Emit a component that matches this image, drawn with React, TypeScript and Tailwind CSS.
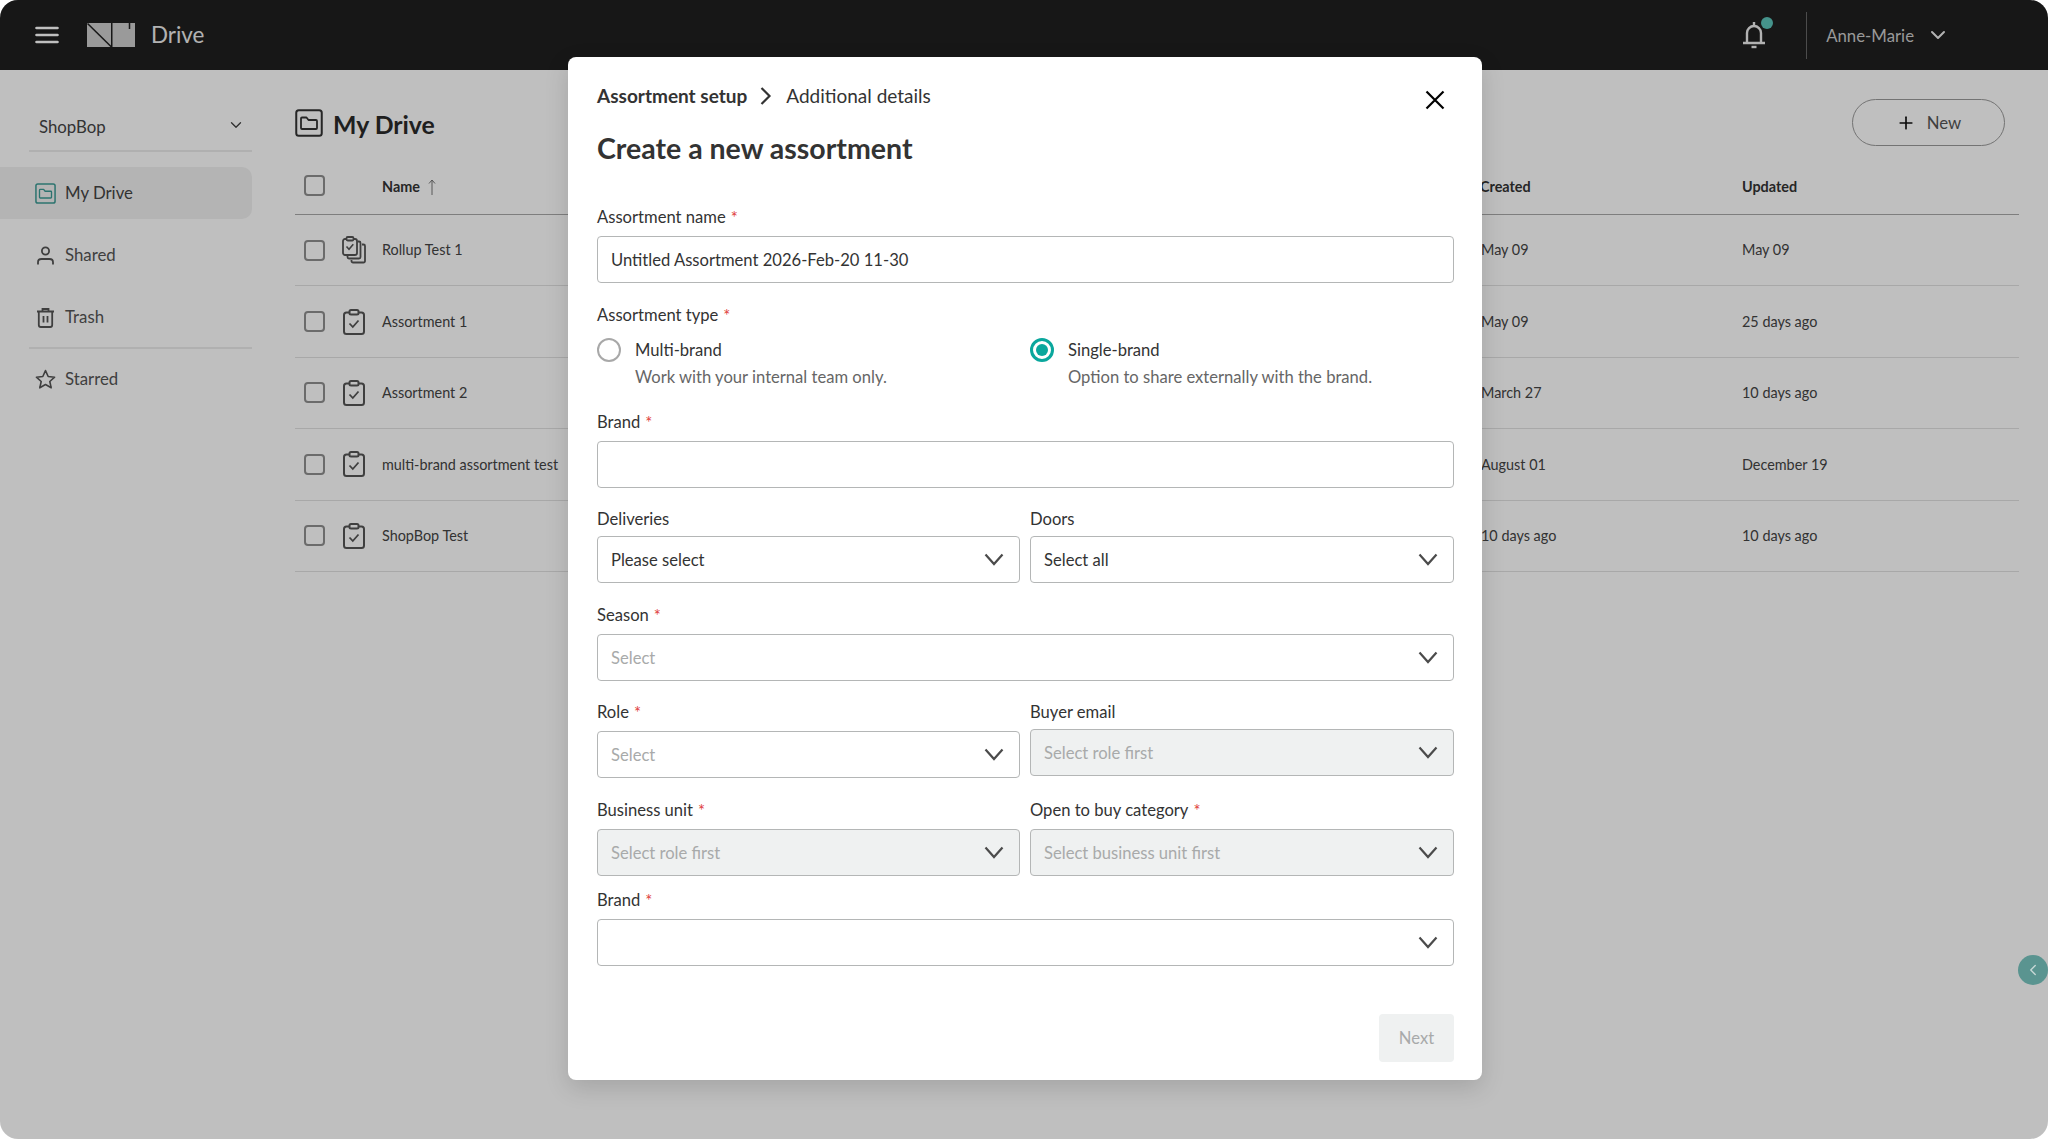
import React from "react";
import { ChevronDown, ChevronLeft, Plus } from "lucide-react";

const FolderIcon = ({ className }: { className: string }) => (
  <svg viewBox="0 0 28 28" fill="none" stroke="currentColor" className={className}>
    <rect x="1.25" y="1.25" width="25.5" height="25.5" rx="2.5" strokeWidth="2" />
    <path d="M6 9.5a1 1 0 0 1 1-1h4.5l2 2.5H21a1 1 0 0 1 1 1v7a1 1 0 0 1-1 1H7a1 1 0 0 1-1-1z" strokeWidth="1.8" strokeLinejoin="round" />
  </svg>
);

const ClipIcon = () => (
  <svg viewBox="0 0 22 26" fill="none" stroke="currentColor" strokeWidth="2" className="h-[26px] w-[22px] text-[#555]">
    <rect x="1" y="3.5" width="20" height="21.5" rx="2.5" />
    <rect x="6.5" y="1" width="9" height="4.5" rx="1.5" fill="#fff" />
    <path d="M6.5 14.5l3.3 3.5 5.7-6.5" strokeWidth="1.8" />
  </svg>
);

const RollupIcon = () => (
  <svg viewBox="0 0 24 28" fill="none" stroke="currentColor" strokeWidth="1.8" className="h-[28px] w-[24px] text-[#555]">
    <path d="M20 8.5h1.5a1.5 1.5 0 0 1 1.5 1.5v15a1.5 1.5 0 0 1-1.5 1.5H11a1.5 1.5 0 0 1-1.5-1.5v-1" />
    <path d="M15.5 5.5h1.5a1.5 1.5 0 0 1 1.5 1.5v14a1.5 1.5 0 0 1-1.5 1.5H7a1.5 1.5 0 0 1-1.5-1.5v-1" />
    <rect x="1" y="3" width="14" height="16" rx="2" fill="#fff" />
    <rect x="4.5" y="1" width="7" height="3.5" rx="1.2" fill="#fff" />
    <path d="M4.5 10.5l2.5 2.7 4.3-5" strokeWidth="1.6" />
  </svg>
);

const Logo = () => (
  <svg viewBox="0 0 48 24" className="h-[24px] w-[48px]">
    <rect x="0" y="0" width="24" height="24" fill="#cecece" />
    <rect x="25.5" y="0" width="22.5" height="24" fill="#cecece" />
    <path d="M0.5 0.5L24.5 24" stroke="#1f1f1f" strokeWidth="1.5" />
    <path d="M42.5 0v6" stroke="#1f1f1f" strokeWidth="1.5" />
  </svg>
);

const Req = () => <span className="relative top-[1px] ml-[5px] text-[#e0403c]">*</span>;

const Label = ({ text, req }: { text: string; req?: boolean }) => (
  <div className="text-[16.6px] leading-[22px] text-[#333]">
    {text}
    {req && <Req />}
  </div>
);

const FieldChevron = () => (
  <svg viewBox="0 0 20 13" fill="none" stroke="currentColor" strokeWidth="2.2" className="h-[13px] w-[20px] text-[#4b4b4b]">
    <path d="M1.5 1.5l8.5 9.5 8.5-9.5" />
  </svg>
);

const Field = ({
  value,
  placeholder,
  disabled,
  chevron = true,
}: {
  value?: string;
  placeholder?: string;
  disabled?: boolean;
  chevron?: boolean;
}) => (
  <div
    className={`flex h-[47px] items-center justify-between rounded-[4px] border border-[#b4b6b6] pl-[13px] pr-[15.5px] text-[16.6px] ${
      disabled ? "bg-[#eff1f1]" : "bg-white"
    }`}
  >
    <span className={`pt-[1px] ${value ? "text-[#333]" : "text-[#a8aaaa]"}`}>{value || placeholder}</span>
    {chevron && <FieldChevron />}
  </div>
);

const rows = [
  { name: "Rollup Test 1", created: "May 09", updated: "May 09", rollup: true },
  { name: "Assortment 1", created: "May 09", updated: "25 days ago" },
  { name: "Assortment 2", created: "March 27", updated: "10 days ago" },
  { name: "multi-brand assortment test", created: "August 01", updated: "December 19" },
  { name: "ShopBop Test", created: "10 days ago", updated: "10 days ago" },
];

const Checkbox = () => <div className="h-[21px] w-[21px] shrink-0 rounded-[4px] border-2 border-[#8f8f8f] bg-white" />;

export default function App() {
  return (
    <div className="relative h-[1139px] w-[2048px] overflow-hidden rounded-[18px] bg-white font-['Lato','Noto_Sans',sans-serif]">
      <header className="flex h-[70px] items-center bg-[#1f1f1f] pl-[35px] pr-[98px] text-[#eee]">
        <svg viewBox="0 0 24 18" fill="none" stroke="#fff" strokeWidth="2.6" strokeLinecap="round" className="h-[18px] w-[24px]">
          <path d="M1.5 2h21M1.5 9h21M1.5 16h21" />
        </svg>
        <div className="ml-[28px]"><Logo /></div>
        <span className="ml-[16px] text-[22.4px]">Drive</span>
        <div className="ml-auto flex items-center">
          <div className="relative">
            <svg viewBox="0 0 24 28" fill="none" stroke="currentColor" strokeWidth="2.4" className="h-[28px] w-[24px]">
              <path d="M12 1v3M5 21.5V12a7 7 0 0 1 14 0v9.5M1 22h22" />
              <path d="M9.5 26h5" strokeWidth="2.4" />
            </svg>
            <span className="absolute -right-[7px] -top-[4px] h-[12px] w-[12px] rounded-full bg-[#5cc4ba]" />
          </div>
          <div className="ml-[40px] h-[47px] w-px bg-[#666]" />
          <span className="ml-[19px] pt-[2px] text-[16.8px] text-[#ccc]">Anne-Marie</span>
          <ChevronDown size={24} strokeWidth={2} className="ml-[12px]" />
        </div>
      </header>

      <div className="flex">
        <aside className="w-[252px] shrink-0">
          <div className="ml-[29px] mt-[36px] flex h-[46px] items-center justify-between border-b-2 border-[#ebebeb] pb-[2px] pl-[10px] pr-[7px] text-[16.8px] text-[#444]">
            <span>ShopBop</span>
            <ChevronDown size={18} strokeWidth={1.8} className="-mt-[4px]" />
          </div>
          <nav className="mt-[15px] text-[16.8px] text-[#555]">
            <div className="flex h-[52px] items-center gap-[9px] rounded-r-[10px] bg-[#f1f1f1] pl-[35px] text-[#444]">
              <FolderIcon className="h-[21px] w-[21px] text-[#3b9a94]" />
              My Drive
            </div>
            <div className="mt-[10px] flex h-[52px] items-center gap-[9px] pl-[35px]">
              <svg viewBox="0 0 21 21" fill="none" stroke="currentColor" strokeWidth="1.8" className="h-[21px] w-[21px]">
                <circle cx="10.5" cy="6" r="3.6" />
                <path d="M3 19.5v-2.3c0-2 1.6-3.2 3.5-3.2h8c1.9 0 3.5 1.2 3.5 3.2v2.3" />
              </svg>
              Shared
            </div>
            <div className="mt-[10px] flex h-[52px] items-center gap-[9px] pl-[35px]">
              <svg viewBox="0 0 21 21" fill="none" stroke="currentColor" strokeWidth="1.8" className="h-[21px] w-[21px]">
                <path d="M2 4.5h17M7.5 4.5V2h6v2.5M3.8 4.5V18a2 2 0 0 0 2 2h9.4a2 2 0 0 0 2-2V4.5M8.5 9v6.5M12.5 9v6.5" />
              </svg>
              Trash
            </div>
            <div className="ml-[29px] mt-[4px] border-b-2 border-[#ebebeb]" />
            <div className="mt-[4px] flex h-[52px] items-center gap-[9px] pl-[35px]">
              <svg viewBox="0 0 21 21" fill="none" stroke="currentColor" strokeWidth="1.6" strokeLinejoin="round" className="h-[21px] w-[21px]">
                <path d="M10.5 1.6l2.7 5.9 6.4.7-4.8 4.3 1.4 6.3-5.7-3.3-5.7 3.3 1.4-6.3L1.4 8.2l6.4-.7z" />
              </svg>
              Starred
            </div>
          </nav>
        </aside>

        <main className="ml-[43px] mr-[29px] min-w-0 flex-1">
          <div className="relative mt-[29px] flex h-[48px] items-center">
            <FolderIcon className="h-[28px] w-[28px] text-[#333]" />
            <h1 className="ml-[10px] mt-[4px] text-[24.8px] font-bold text-[#2a2a2a]">My Drive</h1>
            <button className="-mt-[2px] ml-auto mr-[14px] flex h-[47px] w-[153px] items-center justify-center gap-[11px] rounded-full border border-[#9a9a9a] pt-[2px] text-[16.8px] text-[#555]">
              <Plus size={20} strokeWidth={2} className="text-[#111]" />
              New
            </button>
          </div>
          <div className="mt-[13px] flex h-[55px] items-center border-b-[1.5px] border-[#a8a8a8] pb-[0px] text-[14.4px] font-bold text-[#333]">
            <div className="-mt-[3px] ml-[9px]"><Checkbox /></div>
            <div className="ml-[57px] flex items-center gap-[8px]">
              Name
              <svg viewBox="0 0 8 16" fill="none" stroke="#777" strokeWidth="1" className="h-[16px] w-[8px]"><path d="M4 16V1M1 4.5L4 1l3 3.5" /></svg>
            </div>
            <div className="absolute left-[1480px]">Created</div>
            <div className="absolute left-[1742px]">Updated</div>
          </div>
          {rows.map((r) => (
            <div key={r.name} className="flex h-[71.4px] items-center border-b-[1.5px] border-[#e0e0e0] text-[14.4px] text-[#444]">
              <div className="ml-[9px]"><Checkbox /></div>
              <div className="ml-[17px] flex w-[24px] justify-center">{r.rollup ? <RollupIcon /> : <ClipIcon />}</div>
              <div className="ml-[16px] w-[1099px]">{r.name}</div>
              <div className="w-[261px]">{r.created}</div>
              <div>{r.updated}</div>
            </div>
          ))}
        </main>
      </div>

      <div className="absolute inset-0 bg-black/25" />

      <button className="absolute left-[2018px] top-[955px] flex h-[30px] w-[30px] items-center justify-center rounded-full bg-[#5a9490] text-[#c8d8d6]">
        <ChevronLeft size={18} strokeWidth={1.8} />
      </button>

      <div className="absolute left-[568px] top-[57px] h-[1023px] w-[914px] rounded-[8px] bg-white pl-[29px] pr-[28px] pt-[27px] shadow-[0_8px_24px_rgba(0,0,0,0.14)]">
        <button className="absolute right-[37px] top-[33px] text-black">
          <svg viewBox="0 0 20 20" fill="none" stroke="currentColor" strokeWidth="2.2" className="h-[20px] w-[20px]"><path d="M1.5 1.5l17 17M18.5 1.5l-17 17" /></svg>
        </button>
        <div className="flex h-[24px] items-center text-[19px] text-[#333]">
          <span className="font-bold">Assortment setup</span>
          <svg viewBox="0 0 12 18" fill="none" stroke="currentColor" strokeWidth="2.2" className="ml-[13px] mr-[14px] h-[18px] w-[12px]"><path d="M1.5 1l8 8-8 8" /></svg>
          <span>Additional details</span>
        </div>
        <h2 className="mt-[20px] text-[28.5px] font-bold leading-[40px] text-[#333]">Create a new assortment</h2>

        <div className="mt-[38px]"><Label text="Assortment name" req /></div>
        <div className="mt-[8px]"><Field value="Untitled Assortment 2026-Feb-20 11-30" chevron={false} /></div>

        <div className="mt-[21px]"><Label text="Assortment type" req /></div>
        <div className="mt-[11px] grid grid-cols-[423px_424px] gap-[10px] text-[16.6px]">
          <div className="flex gap-[14px]">
            <div className="mt-[1px] h-[24px] w-[24px] rounded-full border-2 border-[#a8a8a8]" />
            <div>
              <div className="leading-[26px] text-[#333]">Multi-brand</div>
              <div className="leading-[28px] text-[#666]">Work with your internal team only.</div>
            </div>
          </div>
          <div className="flex gap-[14px]">
            <div className="mt-[1px] flex h-[24px] w-[24px] items-center justify-center rounded-full border-[3px] border-[#0aa79d]">
              <div className="h-[12px] w-[12px] rounded-full bg-[#0aa79d]" />
            </div>
            <div>
              <div className="leading-[26px] text-[#333]">Single-brand</div>
              <div className="leading-[28px] text-[#666]">Option to share externally with the brand.</div>
            </div>
          </div>
        </div>

        <div className="mt-[20px]"><Label text="Brand" req /></div>
        <div className="mt-[8px]"><Field chevron={false} /></div>

        <div className="mt-[20px] grid grid-cols-[423px_424px] gap-[10px]">
          <div>
            <Label text="Deliveries" />
            <div className="mt-[6px]"><Field value="Please select" /></div>
          </div>
          <div>
            <Label text="Doors" />
            <div className="mt-[6px]"><Field value="Select all" /></div>
          </div>
        </div>

        <div className="mt-[21px]"><Label text="Season" req /></div>
        <div className="mt-[8px]"><Field placeholder="Select" /></div>

        <div className="mt-[20px] grid grid-cols-[423px_424px] gap-[10px]">
          <div>
            <Label text="Role" req />
            <div className="mt-[8px]"><Field placeholder="Select" /></div>
          </div>
          <div>
            <Label text="Buyer email" />
            <div className="mt-[6px]"><Field placeholder="Select role first" disabled /></div>
          </div>
        </div>

        <div className="mt-[21px] grid grid-cols-[423px_424px] gap-[10px]">
          <div>
            <Label text="Business unit" req />
            <div className="mt-[8px]"><Field placeholder="Select role first" disabled /></div>
          </div>
          <div>
            <Label text="Open to buy category" req />
            <div className="mt-[8px]"><Field placeholder="Select business unit first" disabled /></div>
          </div>
        </div>

        <div className="mt-[13px]"><Label text="Brand" req /></div>
        <div className="mt-[8px]"><Field /></div>

        <div className="mt-[48px] flex justify-end">
          <button className="h-[48px] w-[75px] rounded-[4px] bg-[#eff1f1] text-[16.6px] text-[#a8aaaa]">Next</button>
        </div>
      </div>
    </div>
  );
}
